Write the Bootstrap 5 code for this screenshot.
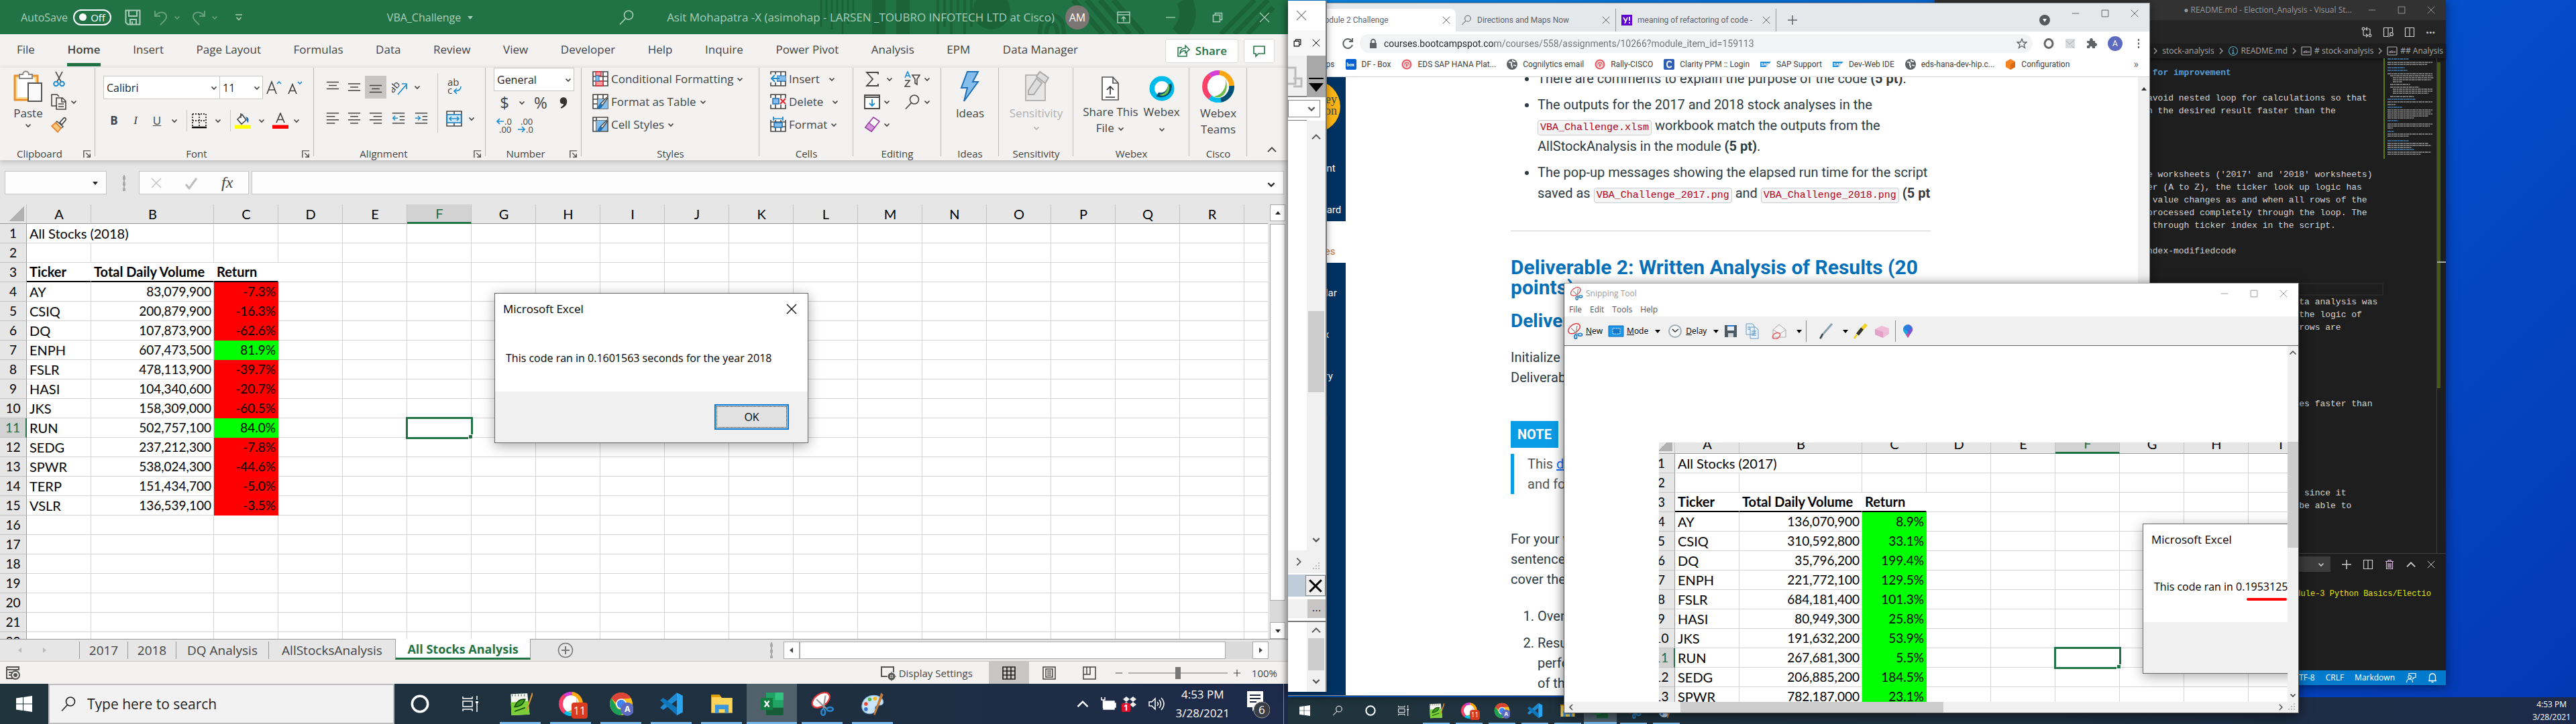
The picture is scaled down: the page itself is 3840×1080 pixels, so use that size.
<!DOCTYPE html>
<html lang="en">
<head>
<meta charset="utf-8">
<meta name="viewport" content="width=device-width, initial-scale=1">
<title>VBA_Challenge - Excel</title>
<link href="https://cdn.jsdelivr.net/npm/bootstrap@5.3.0/dist/css/bootstrap.min.css" rel="stylesheet">
<style>
:root{--seg:"Open Sans","Noto Sans",sans-serif;--xl:#217346}
html,body{height:100%}
body{font-family:var(--seg);font-size:17px;line-height:24px;color:#262626;overflow:hidden;background:#0442bf}
svg{display:block;flex:none}
.s12{width:12px;height:12px}.s16{width:16px;height:16px}.s20{width:20px;height:20px}.s24{width:24px;height:24px}.s28{width:28px;height:28px}.s36{width:36px;height:36px}.s48{width:48px;height:48px}
.ib{background:none;border:0;border-radius:0;padding:0;color:inherit;font:inherit;display:flex;align-items:center;justify-content:center;flex:none}
.w16{width:16px}.w24{width:24px}.w32{width:32px}.w36{width:36px}.w44{width:44px}.w70{width:70px}
.monitor{flex:1 1 50%;min-width:0}
.canvas{position:relative;min-height:0}
.win{position:absolute}
/* Excel title bar and tabs */
.xtitle,.xtabs,.ribbon,.fbar,.stabs,.sstat{flex:none}
.xtitle{height:51px;background:var(--xl);color:#a9cdb8;font-size:16px;position:relative;padding-left:31px}
.deco{position:absolute;right:20px;top:0;width:680px;height:51px}
.xtitle>*:not(.deco){position:relative}
.toggle{width:57px;height:24px;border:2px solid #fff;border-radius:12px;color:#fff;font-size:15px;line-height:20px;padding:0 7px}
.toggle i{width:11px;height:11px;border-radius:50%;background:#fff}
.avatar{width:36px;height:36px;border-radius:50%;background:#7b7574;color:#fff;font-size:16px;line-height:36px;text-align:center}
.xtabs{height:50px;background:#f3f2f1;color:#444;padding-left:25px;padding-right:20px}
.xtabs .nav{flex:0 1 1582px;height:46px}
.xtabs a{color:#444;text-decoration:none;line-height:42px;white-space:nowrap}
.xtabs a.on{font-weight:600;border-bottom:5px solid var(--xl)}
.xbtn{background:#fff;border:1px solid #dcdad8;border-radius:3px;height:36px;color:var(--xl);font-weight:600;font-size:17px}
.ribbon{height:138px;background:#f3f2f1;color:#444;box-shadow:0 2px 8px #0003;position:relative;z-index:1}
.grp{background:linear-gradient(#bdbbb9,#bdbbb9) right top/1px 132px no-repeat;display:flex;flex-direction:column;position:relative;flex:none;white-space:nowrap}
.grp>.gbody{flex:1;display:flex;min-height:0}
.grp>.glabel{height:20px;line-height:20px;font-size:15px;text-align:center}
.grp .launch{position:absolute;right:6px;bottom:3px}
.vsep{width:1px;background:#c8c6c4;height:32px}
.sel{appearance:none;border:1px solid #c8c6c4;background:#fff;border-radius:0;height:35px;padding:0 4px;font-size:16px;color:#262626}
.selbox{position:relative}
.selbox svg{position:absolute;right:3px;top:12px;pointer-events:none}
.picked{background:#c8c6c4}
.rrow{height:34px;display:flex;align-items:center}
.mid{color:#444;font-size:17px}
.fbar{height:66px;background:#e6e6e6;padding:16px 6px 15px 7px}
.fbox{border:1px solid #c6c6c6;background:#fdfdfd;border-radius:0;height:35px}
.dots{width:4px;height:24px;background:radial-gradient(#aaa 2px,transparent 2px) 0 0/4px 9px}
/* worksheets */
.sheet{overflow:hidden;background:#fff}
.grid{table-layout:fixed;border-collapse:separate;border-spacing:0;font-family:Lato,sans-serif;font-size:20px;line-height:28px;color:#000}
.grid td,.grid th{height:29px;padding:0 3px 0 4px;border:0 solid #d4d4d4;border-width:0 1px 1px 0;overflow:visible;white-space:nowrap;font-weight:400}
.grid thead th{background:#e6e6e6;border-color:#c3c3c3;border-bottom-color:#999;text-align:center}
.grid tbody th{background:#e6e6e6;border-color:#c3c3c3;border-right-color:#999;text-align:center;padding:0}
.grid .num{text-align:right;font-size:19px}
.grid .hd{font-weight:700;line-height:27px;border-bottom:2px solid #000;border-right-color:transparent}
.grid .nb{border-right-color:transparent}
.grid .neg{background:#f00;border-color:#f00}
.grid .pos{background:#0f0;border-color:#0f0}
.grid thead .cur{background:#d2d2d2;color:#1e6b3f;line-height:26px;border-bottom:3px solid var(--xl)}
.grid tbody .cur{background:#d2d2d2;color:#1e6b3f;border-right:2px solid var(--xl)}
.grid .act{outline:3px solid var(--xl);outline-offset:-1px;position:relative}
.grid .act::after{content:"";position:absolute;right:-3px;bottom:-3px;width:7px;height:7px;background:var(--xl);border:1px solid #fff}
.corner{background:linear-gradient(135deg,transparent 50%,#b1b1b1 50%) 14px 3px/22px 22px no-repeat #e6e6e6!important}
.sbar{width:30px;background:#e6e6e6;padding-left:3px;padding-right:4px}
.sbx{background:#fff;border:1px solid #ababab}
.stabs{height:34px;background:#e6e6e6;border-top:1px solid #999;border-bottom:1px solid #c6c6c6;font-size:19px;color:#444}
.stabs a{color:#444;text-decoration:none;height:26px;line-height:26px;border-left:1px solid #999;margin-top:3px;text-align:center;flex:none}
.stabs a.on{background:#fff;color:var(--xl);font-weight:700;font-size:18px;height:31px;line-height:30px;margin-top:-1px;border-bottom:3px solid var(--xl);border-right:1px solid #999}
.sstat{height:33px;background:#f3f2f1;color:#444;font-size:15px}
.zoomer{appearance:none;width:148px;height:18px;background:linear-gradient(#b3b0ad,#b3b0ad) center/100% 2px no-repeat;margin:0}
.zoomer::-webkit-slider-thumb{appearance:none;width:8px;height:18px;background:#777;border:0}
/* message boxes */
.msg{position:absolute;width:468px;height:224px;background:#fff;border:1px solid #666;box-shadow:0 4px 18px #0005;color:#000;display:flex;flex-direction:column;font-size:16px}
.msg header{height:46px;padding-left:12px;padding-right:16px;font-size:17px}
.msg p{margin:0;padding:38px 16px 0;flex:1;white-space:nowrap}
.msg footer{height:76px;background:#f0f0f0;padding-right:28px}
.ok{width:111px;height:38px;border:2px solid #0078d7;background:#e1e1e1;outline:1px dotted #000;outline-offset:-4px;font-size:16px;border-radius:0;padding:0;color:#000}
/* taskbars */
.task{background:linear-gradient(90deg,#20343d,#1f3040 60%,#1e2a4a);color:#fff;flex:none;position:relative}
.t1{height:60px}.t2{height:40px}
.t1 .app{width:75px;height:60px}.t2 .app{width:49px;height:40px}
.app.run{background:linear-gradient(#76b9ed,#76b9ed) bottom/61px 3px no-repeat}
.t2 .app.run{background-size:40px 2px}
.app.front{background:linear-gradient(#76b9ed,#76b9ed) bottom/100% 3px no-repeat,#50616c}
.find{width:516px;height:60px;background:#f2f2f2;border:2px solid #bdbdbf;color:#222}
.find input{border:0;background:none;font-size:21px;outline:0;width:400px;padding:0}
.find input::placeholder{color:#222;opacity:1}
.clock{font-size:17px;line-height:28px;text-align:center}
.t2 .clock{font-size:12px;line-height:19px}
.nbadge{position:absolute;background:#d83b1f;color:#fff;border-radius:4px;text-align:center}
.t1 .nbadge{width:24px;height:24px;right:12px;bottom:8px;font-size:16px;line-height:24px}
.t2 .nbadge{width:15px;height:15px;right:8px;bottom:6px;font-size:10px;line-height:15px}
/* VBA editor sliver */
.vba{left:0;top:1px;width:58px;height:1031px;background:#fff;border-right:2px solid #777;box-shadow:0 0 10px #0006;overflow:hidden;z-index:2}
.gr{background:#f0f0f0}
/* browser */
.chrome{left:0;top:4px;width:1285px;height:1034px;background:#fff;border:1px solid #8a8d90;border-width:1px 1px 1px 0;font-family:Roboto,sans-serif;font-size:12px;line-height:16px;color:#5f6368;z-index:1;box-shadow:0 2px 12px #0007}
.cstrip{height:42px;background:#e5e8eb}
.ctab{height:34px;margin-top:8px;white-space:nowrap;overflow:hidden}
.ctab.on{background:#fff;border-radius:8px 8px 0 0;width:250px;padding-left:44px}
.pill{background:#f1f3f4;border-radius:14px;height:28px}
.url{border:0;flex:1;font-size:14px;padding:0;outline:0;color:transparent;background:linear-gradient(90deg,#202124 165px,#6d7175 165px);-webkit-background-clip:text;background-clip:text}
.marks{height:32px;padding-bottom:4px;border-bottom:1px solid #d4d6d8;white-space:nowrap;padding-left:42px;gap:16px}
.marks a{color:#3c4043;text-decoration:none;display:flex;align-items:center;gap:8px}
.side{width:86px;background:#003262;flex:none;font-size:15px;overflow:hidden}
.side a{height:62px;display:flex;align-items:flex-end;justify-content:center;padding-bottom:9px;color:#fff;text-decoration:none}
.side a.on{background:#fff;color:#b4713d}
.logo{height:91px;padding-left:0}
.logo div{width:78px;height:78px;border-radius:50%;background:#fdb515;color:#3b4a50;font:18px/17px "Liberation Serif",serif;text-align:right;padding:20px 5px 0 0;margin-top:5px}
.lesson{padding-left:246px;width:872px;font-size:20px;line-height:30px;color:#2d3b45;white-space:nowrap;overflow:hidden}
.lesson ul{margin:-13px 0 0;padding-left:40px;line-height:31px}
.lesson ul li{margin-bottom:8px}
.lesson code{font:15px/20px "Liberation Mono",monospace;color:#b00020;background:#f5f5f5;border:1px solid #c7cdd1;border-radius:4px;padding:2px 3px}
.lesson hr{margin:40px 0 39px;border-color:#c7cdd1;opacity:1;border-top-width:1px}
.lesson h2{font-size:30px;line-height:30px;font-weight:700;color:#0770b8;margin:0 0 20px}
.lesson h3{font-size:28px;line-height:30px;font-weight:700;color:#0770b8;margin:0 0 24px}
.lesson p{margin:0}
.note{background:#0a9ce5;color:#fff;font-weight:700;display:inline-block;padding:5px 10px;margin-top:50px}
.lesson .quote{border-left:5px solid #0a9ce5;padding-left:20px;margin:9px 0 52px;color:#555}
.lesson ol{padding-left:40px;margin:25px 0 0}
.lesson ol li{margin-bottom:10px}
/* code editor */
.vsc{left:964px;top:0;width:762px;height:1022px;background:#1e1e1e;color:#ccc;font-size:12px;line-height:18px;box-shadow:0 2px 14px #0008;display:flex;flex-direction:column}
.vsc .bar{height:30px;background:#323233;color:#999}
.vsc .tools{height:35px;background:#252526}
.crumb{height:22px;white-space:nowrap;color:#a9a9a9;overflow:hidden;box-shadow:0 3px 4px #0006;font-size:12px}
.code{font:13px/19px "Liberation Mono",monospace;color:#d4d4d4;padding:12px 0 0 317px;margin:0;overflow:hidden;flex:1}
.code b{color:#569cd6}
.code .hl{display:block;height:19px;box-shadow:inset 0 0 0 2px #282828}
.mini{width:79px;flex:none;border-left:2px solid #587c0c;height:150px;padding-left:4px}
.rule{width:14px;border-left:1px solid #3c3c3c;flex:none;background:linear-gradient(#aaa,#aaa) 0 303px/14px 2px no-repeat,linear-gradient(#435b14,#435b14) 0 6px/5px 486px no-repeat}
.panel{height:175px;flex:none;border-top:1px solid #414141;font-size:12px}
.term{font:12px/18px "Liberation Mono",monospace;color:#e5e510;text-align:right;padding:24px 22px 0 0}
.vstat{height:22px;background:#007acc;color:#fff;padding-right:12px}
/* snipping tool */
.snip{left:411px;top:422px;width:1096px;height:642px;background:#fff;border:1px solid #555;border-top-color:#aaa;box-shadow:0 3px 16px #0009;font-size:12px;line-height:18px;z-index:5;color:#000;display:flex;flex-direction:column}
.snip .cap{height:29px;color:#999}
.snip .menu{height:20px;padding-left:7px;gap:12px;color:#555}
.snip .menu a{color:#555;text-decoration:none}
.snip .tb{height:44px;background:#f0f0f0;border-bottom:1px solid #666}
.shot{position:absolute;left:141px;top:144px;right:0;bottom:0;overflow:hidden}
.shot .grid{margin:-12px 0 0 -16px}
.red{position:absolute;left:876px;top:232px;width:60px;height:4px;background:#f00;border-radius:2px}
</style>
</head>
<body>
<svg width="0" height="0" class="position-absolute" aria-hidden="true"><defs>
<symbol id="cv" viewBox="0 0 12 12"><path d="M2.500 4.500 6 8l3.500-3.500" fill="none" stroke="currentColor" stroke-width="1.700"/></symbol>
<symbol id="up" viewBox="0 0 12 12"><path d="M1.500 8.500 6 4l4.500 4.500" fill="none" stroke="currentColor" stroke-width="1.500"/></symbol>
<symbol id="rt" viewBox="0 0 12 12"><path d="M4 2l4 4-4 4" fill="none" stroke="currentColor" stroke-width="1.300"/></symbol>
<symbol id="lt" viewBox="0 0 12 12"><path d="M8 2L4 6l4 4" fill="none" stroke="currentColor" stroke-width="1.500"/></symbol>
<symbol id="tri" viewBox="0 0 12 12"><path d="M2 4h8L6 9z" fill="currentColor"/></symbol>
<symbol id="x" viewBox="0 0 16 16"><path d="M1 1l14 14M15 1L1 15" fill="none" stroke="currentColor" stroke-width="1.300"/></symbol>
<symbol id="min" viewBox="0 0 16 16"><path d="M1 8h14" stroke="currentColor" stroke-width="1.300"/></symbol>
<symbol id="max" viewBox="0 0 16 16"><path d="M1.500 1.500h13v13h-13z" fill="none" stroke="currentColor" stroke-width="1.300"/></symbol>
<symbol id="rest" viewBox="0 0 16 16"><path d="M1.500 4.500h10v10h-10zM4.500 4V1.500h10v10H12" fill="none" stroke="currentColor" stroke-width="1.500"/></symbol>
<symbol id="plus" viewBox="0 0 16 16"><path d="M8 1v14M1 8h14" stroke="currentColor" stroke-width="1.500"/></symbol>
<symbol id="mag" viewBox="0 0 24 24"><circle cx="15" cy="8.500" r="6.500" fill="none" stroke="currentColor" stroke-width="1.600"/><path d="M10.500 13.500 2 22.500" stroke="currentColor" stroke-width="1.600"/></symbol>
<symbol id="floppy" viewBox="0 0 24 24"><path d="M1.500 1.500h21v21h-18l-3-3zM6 2v8h12V2M8 22v-7h9v7M11 22v-4" fill="none" stroke="currentColor" stroke-width="2"/></symbol>
<symbol id="undo" viewBox="0 0 24 24"><path d="M3 2v8h8M3.500 9.500C9 2 20 3 20 11c0 5-4 6-9 12" fill="none" stroke="currentColor" stroke-width="2"/></symbol>
<symbol id="redo" viewBox="0 0 24 24"><path d="M21 2v8h-8M20.500 9.500C15 2 4 3 4 11c0 5 4 6 9 12" fill="none" stroke="currentColor" stroke-width="2"/></symbol>
<symbol id="qat" viewBox="0 0 12 12"><path d="M1 2h10M2.500 6 6 9.500 9.500 6" fill="none" stroke="currentColor" stroke-width="1.700"/></symbol>
<symbol id="ropt" viewBox="0 0 20 20"><path d="M1 2h18v16H1zM1 6h18M10 16V9M7 12l3-3 3 3" fill="none" stroke="currentColor" stroke-width="1.500"/></symbol>
<symbol id="shr" viewBox="0 0 20 20"><path d="M8 5H2v13h13v-6M5 14c0-6 4-8 8-8V2l6 6-6 5V9.500c-4 0-6 1-8 4.500z" fill="none" stroke="currentColor" stroke-width="1.500"/></symbol>
<symbol id="cmt" viewBox="0 0 20 20"><path d="M2 3h16v11H9l-4 4v-4H2z" fill="none" stroke="currentColor" stroke-width="1.600"/></symbol>
<symbol id="launch" viewBox="0 0 14 14"><path d="M1 13V1h12M5 5l7 7M12 6v6H6" fill="none" stroke="#555" stroke-width="1.700"/></symbol>
<symbol id="paste" viewBox="0 0 48 48"><path d="M4 8h34v36H4z" fill="#fbdc9b" stroke="#e8912d" stroke-width="3"/><path d="M8 12h26v28H8z" fill="#fff"/><path d="M11 12V6h5c0-6 9-6 9 0h5v6z" fill="#fff" stroke="#888" stroke-width="2"/><path d="M24 19h20v27H24z" fill="#fafafa" stroke="#555" stroke-width="2"/></symbol>
<symbol id="cut" viewBox="0 0 24 24"><path d="M7 1l8 15M17 1L9 16" stroke="#555" stroke-width="1.700"/><g fill="none" stroke="#1e8bcd" stroke-width="2"><circle cx="7.500" cy="19" r="3.300"/><circle cx="16.500" cy="19" r="3.300"/></g></symbol>
<symbol id="copy" viewBox="0 0 24 24"><path d="M9 18H1V1h8l3 3M8 6h9l5 5v12H8zM16 6v6h6M11 15h8M11 19h8" fill="none" stroke="#444" stroke-width="1.600"/></symbol>
<symbol id="brush" viewBox="0 0 24 24"><path d="M13 9l6-7c2-1 4 1 3 3l-6 7z" fill="#fff" stroke="#444" stroke-width="1.700"/><path d="M9 7l9 8-3 2-8-8z" fill="#fff" stroke="#444" stroke-width="1.500"/><path d="M7 9l8 8-5 6L1 14z" fill="#fbc87a" stroke="#e8842d" stroke-width="1.800"/></symbol>
<symbol id="bord" viewBox="0 0 24 24"><path d="M2 2h20v19M2 2v19M12 2v19M2 12h20" fill="none" stroke="#333" stroke-width="1.800" stroke-dasharray="2 2"/><path d="M1 22h22" stroke="#000" stroke-width="2.500"/></symbol>
<symbol id="fill" viewBox="0 0 24 24"><path d="M4 10l7-7 6 8-7 6zM9 1v7" fill="#fff" stroke="#444" stroke-width="1.600"/><path d="M16 6c5 1 5 4 4 9-3-1-1-5-4-9z" fill="#1c6fb5"/><path d="M0 18.500h24V24H0z" fill="#ff0"/></symbol>
<symbol id="fcol" viewBox="0 0 24 24"><path d="M6 15 12 1l6 14M8 10.500h8" fill="none" stroke="#444" stroke-width="1.700"/><path d="M0 18.500h24V24H0z" fill="#f00"/></symbol>
<symbol id="abig" viewBox="0 0 24 24"><path d="M2 21 9 3l7 18M4.500 15h9" fill="none" stroke="#444" stroke-width="1.700"/><path d="M17 6l3-3 3 3" fill="none" stroke="#1e8bcd" stroke-width="1.700"/></symbol>
<symbol id="asml" viewBox="0 0 24 24"><path d="M2 21 8 7l6 14M4.500 16.500h7" fill="none" stroke="#444" stroke-width="1.700"/><path d="M16 3l3 3 3-3" fill="none" stroke="#1e8bcd" stroke-width="1.700"/></symbol>
<symbol id="at" viewBox="0 0 24 24"><path d="M1 3h22M5 9h14M1 15h22" stroke="#444" stroke-width="1.800"/></symbol>
<symbol id="am" viewBox="0 0 24 24"><path d="M1 6h22M5 12h14M1 18h22" stroke="#444" stroke-width="1.800"/></symbol>
<symbol id="ab" viewBox="0 0 24 24"><path d="M1 9h22M5 15h14M1 21h22" stroke="#444" stroke-width="1.800"/></symbol>
<symbol id="al" viewBox="0 0 24 24"><path d="M1 2h22M1 8h15M1 14h22M1 20h15" stroke="#444" stroke-width="1.800"/></symbol>
<symbol id="ac" viewBox="0 0 24 24"><path d="M1 2h22M5 8h14M1 14h22M5 20h14" stroke="#444" stroke-width="1.800"/></symbol>
<symbol id="ar" viewBox="0 0 24 24"><path d="M1 2h22M8 8h15M1 14h22M8 20h15" stroke="#444" stroke-width="1.800"/></symbol>
<symbol id="ind" viewBox="0 0 24 24"><path d="M1 2h22M14 8h9M14 14h9M1 20h22" stroke="#444" stroke-width="1.800"/><path d="M11 11H2M6 7l-4 4 4 4" fill="none" stroke="#1e8bcd" stroke-width="1.800"/></symbol>
<symbol id="oud" viewBox="0 0 24 24"><path d="M1 2h22M14 8h9M14 14h9M1 20h22" stroke="#444" stroke-width="1.800"/><path d="M1 11h9M6 7l4 4-4 4" fill="none" stroke="#1e8bcd" stroke-width="1.800"/></symbol>
<symbol id="ori" viewBox="0 0 24 24"><path d="M9 23 22 8M22 15V7h-7" fill="none" stroke="#1e8bcd" stroke-width="1.700"/><text x="-4" y="15" transform="rotate(-50 6 12)" font-size="15" fill="#444">ab</text></symbol>
<symbol id="wrap" viewBox="0 0 24 24"><text x="2" y="11" font-size="15" fill="#444">ab</text><text x="2" y="23" font-size="15" fill="#444">c</text><path d="M22 12c0 5-3 7-10 7M16 15l-4 4 4 4" fill="none" stroke="#1e8bcd" stroke-width="1.700"/></symbol>
<symbol id="merge" viewBox="0 0 24 24"><path d="M1 1h22v22H1zM12 1v5M12 18v5M1 6h22M1 18h22" fill="#fff" stroke="#444" stroke-width="1.600"/><path d="M1.500 6h21v12h-21z" fill="#d3e9f8" stroke="#1e8bcd" stroke-width="1.600"/><path d="M5 12h14M8 9l-3 3 3 3M16 9l3 3-3 3" fill="none" stroke="#1e8bcd" stroke-width="1.600"/></symbol>
<symbol id="comma" viewBox="0 0 16 24"><path d="M8 3c4 0 6 3 6 7 0 6-4 10-10 12l-1-2c4-2 5-4 5-6-3 1-6-1-6-5 0-3 2-6 6-6z" fill="#333"/></symbol>
<symbol id="dec1" viewBox="0 0 24 24"><path d="M11 6H1M5 2 1 6l4 4" fill="none" stroke="#1e8bcd" stroke-width="1.700"/><text x="12" y="11" font-size="13" fill="#444">.0</text><text x="4" y="23" font-size="13" fill="#444">.00</text></symbol>
<symbol id="dec2" viewBox="0 0 24 24"><path d="M0 18h10M6 14l4 4-4 4" fill="none" stroke="#1e8bcd" stroke-width="1.700"/><text x="4" y="11" font-size="13" fill="#444">.00</text><text x="12" y="23" font-size="13" fill="#444">.0</text></symbol>
<symbol id="g0" viewBox="0 0 24 24"><path d="M1 1h22v21H1zM1 8h22M1 15h22M8 1v21M16 1v21" fill="#fff" stroke="#444" stroke-width="1.600"/></symbol>
<symbol id="cf" viewBox="0 0 24 24"><use href="#g0"/><path d="M5 1h8v6H5zM5 15h11v7H5z" fill="#f59a9e" stroke="#d9262e" stroke-width="1.300"/><path d="M5 7h5v8H5z" fill="#83beec" stroke="#1e6fb5"/></symbol>
<symbol id="ft" viewBox="0 0 24 24"><use href="#g0"/><path d="M8 8h15v14H8z" fill="#83beec"/><path d="M23 6l-8 11-3-2L22 5" fill="#fff" stroke="#444" stroke-width="1.400"/><path d="M12 15c3 1 4 3 2 5-2 3-6 2-8 2 3-1 2-6 6-7z" fill="#1e6fb5"/></symbol>
<symbol id="cs" viewBox="0 0 24 24"><path d="M1 1h22v21H1zM1 6h22M6 1v21" fill="#fff" stroke="#444" stroke-width="1.600"/><path d="M6 6h16v15H6z" fill="#83beec"/><path d="M23 6l-8 11-3-2L22 5" fill="#fff" stroke="#444" stroke-width="1.400"/><path d="M12 15c3 1 4 3 2 5-2 3-6 2-8 2 3-1 2-6 6-7z" fill="#1e6fb5"/></symbol>
<symbol id="ins" viewBox="0 0 24 24"><use href="#g0"/><path d="M10 7h14v8H10z" fill="#83beec" stroke="#1e6fb5"/><path d="M0 5h10v12H0z" fill="#f3f2f1"/><path d="M14 11H2M7 6l-5 5 5 5" fill="none" stroke="#1e8bcd" stroke-width="2"/></symbol>
<symbol id="del" viewBox="0 0 24 24"><use href="#g0"/><path d="M0 6h24v10H0z" fill="#f3f2f1"/><path d="M4 7h9v8H4z" fill="#83beec" stroke="#1e6fb5" stroke-width="1.500"/><path d="M15 7l8 8M23 7l-8 8" stroke="#e02b33" stroke-width="2.200"/></symbol>
<symbol id="fmt" viewBox="0 0 24 24"><use href="#g0"/><path d="M0 0h24v5H0z" fill="#f3f2f1"/><path d="M5 3h14M5 0v6M19 0v6" stroke="#1e8bcd" stroke-width="1.700"/><path d="M6 9h12v7H6z" fill="#83beec" stroke="#1e6fb5" stroke-width="1.500"/></symbol>
<symbol id="sum" viewBox="0 0 24 24"><path d="M21 5V2H4l9 10L4 22h17v-3" fill="none" stroke="#444" stroke-width="1.800"/></symbol>
<symbol id="fdn" viewBox="0 0 24 24"><path d="M1 2h22v20H1zM1 5h22" fill="#fff" stroke="#444" stroke-width="1.800"/><path d="M12 8v10M8 14l4 4 4-4" fill="none" stroke="#1e8bcd" stroke-width="1.800"/></symbol>
<symbol id="era" viewBox="0 0 24 24"><path d="M14 1l9 6L11 22 2 16z" fill="#fff" stroke="#9b3fa5" stroke-width="1.700"/><path d="M7 9l9 7-5 6-9-6z" fill="#d596db" stroke="#9b3fa5" stroke-width="1.400"/></symbol>
<symbol id="sort" viewBox="0 0 24 24"><path d="M1 10 5 1l4 9M2.500 7h5" fill="none" stroke="#1e8bcd" stroke-width="1.600"/><path d="M1 14h7L1 23h8M12 6h11l-4 6v8l-3-2v-6z" fill="none" stroke="#444" stroke-width="1.600"/></symbol>
<symbol id="bolt" viewBox="0 0 36 48"><path d="M14 2h16l-8 15h8L9 46l5-20H5z" fill="#83beec" stroke="#1e6fb5" stroke-width="2"/></symbol>
<symbol id="sens" viewBox="0 0 40 48"><path d="M4 7h29v38H4z" fill="#e6e6e6" stroke="#b5b5b5" stroke-width="2"/><path d="M8 30l12-18 8 7-12 17-8 0zM20 9l5-7 13 9-5 8z" fill="#ddd" stroke="#aaa" stroke-width="2"/></symbol>
<symbol id="sfile" viewBox="0 0 28 38"><path d="M2 2h16l8 9v25H2zM18 2v9h8" fill="#fff" stroke="#555" stroke-width="1.700"/><path d="M14 28V17M9 21l5-5 5 5M7 32h14" fill="none" stroke="#333" stroke-width="1.700"/></symbol>
<symbol id="webex" viewBox="0 0 40 40"><circle cx="20" cy="20" r="15.500" fill="#fff" stroke="#00bceb" stroke-width="8"/><path d="M35 12a17 17 0 0 1-24 20l4-6c8 3 14-4 15-12z" fill="#005073"/><path d="M29 11c2 9-3 18-13 19 10 5 19-6 15-17z" fill="#6ebe4a"/></symbol>
<symbol id="teams" viewBox="0 0 48 48"><g fill="none" stroke-width="8"><path d="M12 8a20 20 0 0 1 14-4" stroke="#d43fd8"/><path d="M26 4a20 20 0 0 1 18 19" stroke="#fca613"/><path d="M44 23a20 20 0 0 1-18 21" stroke="#005073"/><path d="M28 44a20 20 0 0 1-16-4" stroke="#00bceb"/><path d="M12 40A20 20 0 0 1 12 8" stroke="#fb4169"/></g><ellipse cx="24" cy="24" rx="16" ry="17" fill="#fff"/><path d="M34 11c4 10-2 26-17 28 12 6 26-8 17-28z" fill="#6ebe4a"/></symbol>
<symbol id="fx" viewBox="0 0 24 24"><text x="1" y="19" font-family="Liberation Serif" font-style="italic" font-size="24" fill="#444">fx</text></symbol>
<symbol id="rec" viewBox="0 0 24 24"><path d="M2 3h18v5M2 3v17h9M2 7h18M5 11h5M5 15h4" fill="none" stroke="#555" stroke-width="2"/><circle cx="15" cy="15" r="6" fill="none" stroke="#555" stroke-width="2"/><circle cx="15" cy="15" r="3" fill="#555"/></symbol>
<symbol id="dset" viewBox="0 0 24 24"><path d="M10 17H2V3h18v8" fill="none" stroke="#555" stroke-width="2"/><circle cx="17" cy="17" r="4" fill="none" stroke="#555" stroke-width="3"/><path d="M17 10v14M10 17h14" stroke="#555"/></symbol>
<symbol id="v1" viewBox="0 0 20 20"><path d="M1 1h18v18H1zM1 7h18M1 13h18M7 1v18M13 1v18" fill="none" stroke="#222" stroke-width="1.700"/></symbol>
<symbol id="v2" viewBox="0 0 20 20"><path d="M1 1h18v18H1zM5 4h10v12H5zM7 7h6M7 10h6M7 13h6" fill="none" stroke="#444" stroke-width="1.500"/></symbol>
<symbol id="v3" viewBox="0 0 20 20"><path d="M1 1h18v18H1zM1 12h10V1M6 1v11" fill="none" stroke="#444" stroke-width="1.500"/></symbol>
<symbol id="start" viewBox="0 0 24 24"><path d="M0 3.500 10 2v9.500H0zM11 1.900 24 0v11.500H11zM0 12.500h10V22L0 20.500zM11 12.500h13V24l-13-1.900z" fill="#fff"/></symbol>
<symbol id="cort" viewBox="0 0 24 24"><circle cx="12" cy="12" r="10" fill="none" stroke="#fff" stroke-width="3"/></symbol>
<symbol id="tview" viewBox="0 0 24 24"><path d="M1 1v3h14V1M1 23v-3h14v3M1 8h14v8H1zM22 0v6M22 11v13" fill="none" stroke="#fff" stroke-width="1.500"/><path d="M20 8h4v3h-4z" fill="#fff"/></symbol>
<symbol id="npp" viewBox="0 0 32 32"><path d="M3 3l22-1 3 28-24 1z" fill="#f2f6ee"/><path d="M3 14l23-2 2 18-24 1z" fill="#7bd03a"/><path d="M5 3v3M9 3v3M13 3v3M17 3v3M21 3v3" stroke="#666"/><path d="M8 20c3-8 8-11 14-10-2 4-3 8-12 10zM8 26l14-5" fill="#3d9b1c" stroke="#174d0a" stroke-width="1.500"/><path d="M31 1l2 1-8 22-2 2z" fill="#e0952b"/></symbol>
<symbol id="chr" viewBox="0 0 32 32"><circle cx="16" cy="16" r="15" fill="#fbc116"/><path d="M3 8.500A15 15 0 0 1 29 8.500L16 9.500a7 7 0 0 0-7 5z" fill="#db4437"/><path d="M3 8.500A15 15 0 0 0 16 31l6-11a7 7 0 0 1-13-2z" fill="#1b9e58"/><circle cx="16" cy="16" r="7" fill="#fff"/><circle cx="16" cy="16" r="5.500" fill="#4285f4"/></symbol>
<symbol id="chra" viewBox="0 0 32 32"><use href="#chr"/><circle cx="24" cy="23" r="9" fill="#5c6bc0"/><text x="20.500" y="27" font-size="11" font-weight="700" fill="#fff">A</text></symbol>
<symbol id="vs" viewBox="0 0 32 32"><path d="M23 1l8 4v22l-8 4z" fill="#2ba4f0"/><path d="M23 1v10L5 24l-4-3 3-3z" fill="#1f8ad2"/><path d="M23 31V21L5 8l-4 3 3 3z" fill="#0f76ba"/></symbol>
<symbol id="fold" viewBox="0 0 32 32"><path d="M2 4h11l3 4h14v20H2z" fill="#ffd458"/><path d="M2 4h11l2 3H2z" fill="#e2a100"/><path d="M7 28V17h18v11h-5v-5h-8v5z" fill="#3b97dd"/></symbol>
<symbol id="xls" viewBox="0 0 32 32"><path d="M8 1h23v30H8z" fill="#21a366"/><path d="M20 1h11v10H20z" fill="#33c481"/><path d="M8 21h23v10H8z" fill="#185c37"/><path d="M1 8h16v16H1z" fill="#107c41"/><path d="M6 12l6 8M12 12l-6 8" stroke="#fff" stroke-width="2"/></symbol>
<symbol id="snp" viewBox="0 0 32 32"><ellipse cx="14" cy="11" rx="13" ry="8" transform="rotate(-35 14 11)" fill="#fff" stroke="#e03c3c" stroke-width="2"/><path d="M8 10l14 13M20 5l-3 19" stroke="#999" stroke-width="2"/><g fill="none" stroke="#2a84c9" stroke-width="2.500"><ellipse cx="17" cy="27" rx="2.500" ry="4"/><ellipse cx="26" cy="23" rx="4" ry="2.500"/></g></symbol>
<symbol id="pnt" viewBox="0 0 32 32"><path d="M15 5C6 6 0 14 2 22c2 7 11 9 16 5 3-3-1-5 2-8s9 1 10-5c0-6-7-10-15-9z" fill="#c9e4f6" stroke="#7fb3d8"/><circle cx="7" cy="16" r="2.500" fill="#e84b3c"/><circle cx="12" cy="10" r="2.500" fill="#5ab552"/><circle cx="7" cy="23" r="2.500" fill="#3673c9"/><circle cx="19" cy="9" r="2.500" fill="#f4b62c"/><path d="M27 1l3 3-11 27-2-1z" fill="#c47a34"/></symbol>
<symbol id="batt" viewBox="0 0 24 24"><path d="M5 8h16v12H5zM21 11h2v6h-2" fill="#fff" stroke="#fff" stroke-width="1.500"/><path d="M2 2v4h5V2M4.500 6v12" fill="none" stroke="#fff" stroke-width="1.500"/></symbol>
<symbol id="drop" viewBox="0 0 24 24"><path d="M7 1l5 4-5 4-5-4zM17 1l5 4-5 4-5-4zM7 9l5 4-5 4-5-4zM17 9l5 4-5 4-5-4z" fill="#eee"/><rect y="11" width="13" height="13" rx="2" fill="#e0102c"/><text x="3" y="22" font-size="12" font-weight="700" fill="#fff">1</text></symbol>
<symbol id="vol" viewBox="0 0 24 24"><path d="M1 9h4l5-5v16l-5-5H1zM13 9q3 3 0 6M16 6q5 6 0 12M19 3q8 9 0 18" fill="none" stroke="#fff" stroke-width="1.500"/></symbol>
<symbol id="noti" viewBox="0 0 36 44"><path d="M2 3h24v24H16l-6 6v-6H2z" fill="#fff"/><path d="M6 9h16M6 14h16M6 19h10" stroke="#1e2a4a" stroke-width="2"/><circle cx="24" cy="31" r="12" fill="#3a3d45" stroke="#999"/><text x="19" y="37" font-size="17" fill="#fff">6</text></symbol>
<symbol id="globe" viewBox="0 0 16 16"><circle cx="8" cy="8" r="8" fill="#5f6368"/><path d="M3 5c4-1 5 1 4 3s2 2 1 5M9 1c-1 3 2 3 4 3M10 9l4 1" stroke="#fff" stroke-width="1.800" fill="none"/></symbol>
<symbol id="redo2" viewBox="0 0 16 16"><circle cx="8" cy="8" r="7.500" fill="#e4606a"/><circle cx="8" cy="8" r="4.500" fill="none" stroke="#fff" stroke-width="1.300"/><path d="M6 12V8q2-3 4 0v4" fill="none" stroke="#fff" stroke-width="1.200"/></symbol>
<symbol id="box" viewBox="0 0 16 16"><rect width="16" height="16" rx="2" fill="#0061d5"/><text x="1.500" y="10.500" font-size="7" font-weight="700" fill="#fff">box</text></symbol>
<symbol id="clar" viewBox="0 0 16 16"><rect width="16" height="16" rx="2" fill="#2f5fb3"/><path d="M11.500 5.500Q11 3.500 8.500 3.500 5 3.500 5 8t3.500 4.500q2.500 0 3-2" fill="none" stroke="#fff" stroke-width="2"/></symbol>
<symbol id="sap" viewBox="0 0 16 16"><path d="M0 4h16L8 12H0z" fill="#1a8fd8"/><text x="1" y="10" font-size="6" font-weight="700" fill="#fff">SAP</text></symbol>
<symbol id="cube" viewBox="0 0 16 16"><path d="M8 0l7 4v8l-7 4-7-4V4z" fill="#f58220"/><path d="M8 8l7-4v8l-7 4z" fill="#d9680f"/></symbol>
<symbol id="split" viewBox="0 0 16 16"><path d="M1.500 1.500h13v13h-13zM8 1.500v13" fill="none" stroke="currentColor" stroke-width="1.200"/></symbol>
<symbol id="prev" viewBox="0 0 16 16"><path d="M8 14.500H1.500v-13h13V8M8 1.500v13" fill="none" stroke="currentColor" stroke-width="1.200"/><circle cx="13" cy="11" r="2.300" fill="none" stroke="currentColor" stroke-width="1.200"/><path d="M11.500 12.500 9 15.500" stroke="currentColor"/></symbol>
<symbol id="diff" viewBox="0 0 16 16"><g fill="none" stroke="currentColor" stroke-width="1.200"><circle cx="3" cy="3" r="1.800"/><circle cx="13" cy="13" r="1.800"/><path d="M3 5v6q0 2 2 2h4M7 10.500 9.500 13 7 15.500M13 11V5q0-2-2-2H7M9 .5 6.500 3 9 5.500"/></g></symbol>
<symbol id="abc" viewBox="0 0 16 16"><rect x="1" y="2" width="14" height="12" rx="1" fill="none" stroke="currentColor" stroke-width="1.200"/><text x="3" y="10.500" font-size="6" font-weight="700" fill="currentColor">abc</text></symbol>
<symbol id="info" viewBox="0 0 16 16"><circle cx="8" cy="8" r="6.500" fill="none" stroke="#519aba" stroke-width="1.200"/><path d="M8 4v1.500M6.500 7H8v4.500M6 11.500h4" fill="none" stroke="#519aba" stroke-width="1.300"/></symbol>
<symbol id="trash" viewBox="0 0 16 16"><path d="M2 3.500h12M6 3V1.500h4V3M3.500 4v10.500h9V4M6 6v7M8 6v7M10 6v7" fill="none" stroke="#d9b8dd" stroke-width="1.200"/></symbol>
<symbol id="fb" viewBox="0 0 16 16"><path d="M5 4V1.500h10v6h-2l-2 2V7.500" fill="none" stroke="#fff" stroke-width="1.200"/><circle cx="6" cy="7" r="2.300" fill="none" stroke="#fff" stroke-width="1.200"/><path d="M1.500 15q0-5 4.500-5t4.500 5" fill="none" stroke="#fff" stroke-width="1.200"/></symbol>
<symbol id="bell" viewBox="0 0 16 16"><path d="M2 12.500h12M3.500 12V7q0-5 4.500-5t4.500 5v5M6.500 14.500h3" fill="none" stroke="#fff" stroke-width="1.300"/></symbol>
<symbol id="mode" viewBox="0 0 24 20"><path d="M1 2h22v16H1z" fill="#1c97ea" stroke="#0f6bb5"/><path d="M7 6h11v8H7z" fill="#1176c7" stroke="#fff" stroke-dasharray="1.500 1"/></symbol>
<symbol id="clk" viewBox="0 0 24 24"><circle cx="12" cy="12" r="9" fill="#f4f6f7" stroke="#a3adb3" stroke-width="2"/><path d="M8 9l4 4 5-4" fill="none" stroke="#333" stroke-width="1.500"/></symbol>
<symbol id="dsk" viewBox="0 0 24 24"><path d="M3 3h18v18H3z" fill="#4d5a63"/><path d="M7 3h10v8H7z" fill="#e9eef2"/><path d="M7 3h10v2H7z" fill="#1c7cd5"/><path d="M8 15h8v6H8z" fill="#cfd6da"/></symbol>
<symbol id="cp2" viewBox="0 0 24 24"><path d="M3 1h9l3 3v13H3zM9 6h8l4 4v13H9z" fill="#e9f3fb" stroke="#6c9cc4"/><path d="M5 6h4M5 9h4M11 12h7M11 15h7M11 18h7" stroke="#3f82c0"/></symbol>
<symbol id="mail" viewBox="0 0 24 24"><path d="M3 10l9-8 10 8v11H3z" fill="#f4f4f4" stroke="#aaa"/><path d="M3 10l10 6 9-6" fill="none" stroke="#aaa"/><ellipse cx="8" cy="19" rx="6" ry="4" fill="none" stroke="#e36a72" stroke-width="1.700" transform="rotate(-30 8 19)"/></symbol>
<symbol id="pen" viewBox="0 0 24 24"><path d="M22 1L8 17l-3 6" fill="none" stroke="#8aa0ae" stroke-width="3"/><path d="M8 16l-4 7" stroke="#333" stroke-width="2"/></symbol>
<symbol id="hil" viewBox="0 0 24 24"><path d="M21 2L9 15" stroke="#f4d320" stroke-width="5"/><path d="M15 8l-7 9" stroke="#333" stroke-width="5"/><path d="M7 17l-4 6" stroke="#f4d320" stroke-width="3"/></symbol>
<symbol id="ers" viewBox="0 0 24 24"><path d="M2 9l10-5 11 4v8l-9 6-12-5z" fill="#eebbd8"/><path d="M2 9l12 4v9L2 17z" fill="#e3a0c8"/></symbol>
<symbol id="p3d" viewBox="0 0 24 24"><path d="M12 24 4 12a9 9 0 0 1 8-12z" fill="#19a7e0"/><path d="M12 24l8-12A9 9 0 0 0 12 0z" fill="#7a56d6"/><path d="M4 8a8 8 0 0 1 15-2l-7 6z" fill="#2a7de1"/><path d="M9 17h6l-3 7z" fill="#f0457d"/></symbol>
<symbol id="grip" viewBox="0 0 12 12"><path d="M9 0h2v2H9zM9 4h2v2H9zM9 8h2v2H9zM5 4h2v2H5zM5 8h2v2H5zM1 8h2v2H1z" fill="#bbb"/></symbol>
</defs></svg>

<div class="d-flex vh-100">
<!-- primary monitor -->
<section class="monitor d-flex flex-column">
<main class="canvas flex-grow-1 d-flex flex-column">
  <header class="xtitle d-flex align-items-center">
    <svg class="deco" viewBox="0 0 680 51" preserveAspectRatio="none"><g stroke="#1b6339" fill="none"><path d="M4 0v40M12 0v30M20 0v44M28 0v20M36 0v51M44 0v36M52 0v28" stroke-width="3"/><path d="M90 0v51M126 0v51" stroke-width="20"/><path d="M178 0v51M188 0v40M198 0v51M208 0v30M218 0v51M228 0v40" stroke-width="4"/><path d="M330 51q0-28 18-28t18 28M340 51q0-16 8-16t8 16" stroke-width="6"/><path d="M380 0l44 51M400 0l44 51M420 0l44 51M440 0l44 51" stroke-width="8"/><path d="M545 0q14 26-8 51" stroke-width="24"/><path d="M600 51L650 0M620 51L670 0M640 51l38-40" stroke-width="7"/></g><circle cx="258" cy="16" r="28" fill="#1b6339"/></svg>
    <span>AutoSave</span>
    <button class="btn ib toggle justify-content-between ms-2" aria-pressed="false"><i></i>Off</button>
    <button class="btn ib ms-3" style="width:32px" aria-label="Save"><svg class="s24"><use href="#floppy"/></svg></button>
    <span class="d-flex opacity-50"><button class="btn ib ms-2 w36" aria-label="Undo"><svg class="s24"><use href="#undo"/></svg></button><svg class="s12 align-self-center"><use href="#cv"/></svg>
    <button class="btn ib ms-2 w36" aria-label="Redo"><svg class="s24"><use href="#redo"/></svg></button><svg class="s12 align-self-center"><use href="#cv"/></svg></span>
    <button class="btn ib ms-4" aria-label="Customize toolbar"><svg class="s12"><use href="#qat"/></svg></button>
    <span class="flex-grow-1 d-flex justify-content-center align-items-center gap-2">VBA_Challenge<svg class="s12"><use href="#tri"/></svg></span>
    <button class="btn ib me-5" aria-label="Search"><svg class="s24"><use href="#mag"/></svg></button>
    <span class="mid text-reset text-nowrap">Asit Mohapatra -X (asimohap - LARSEN _TOUBRO INFOTECH LTD at Cisco)</span>
    <span class="avatar mx-3">AM</span>
    <button class="btn ib w70" aria-label="Ribbon options"><svg class="s20"><use href="#ropt"/></svg></button>
    <button class="btn ib w70" aria-label="Minimize"><svg class="s16"><use href="#min"/></svg></button>
    <button class="btn ib w70" aria-label="Restore"><svg class="s16"><use href="#rest"/></svg></button>
    <button class="btn ib w70" aria-label="Close"><svg class="s16"><use href="#x"/></svg></button>
  </header>
  <div class="xtabs d-flex align-items-center">
    <nav class="nav justify-content-between flex-nowrap"><a href="#">File</a><a href="#" class="on">Home</a><a href="#">Insert</a><a href="#">Page Layout</a><a href="#">Formulas</a><a href="#">Data</a><a href="#">Review</a><a href="#">View</a><a href="#">Developer</a><a href="#">Help</a><a href="#">Inquire</a><a href="#">Power Pivot</a><a href="#">Analysis</a><a href="#">EPM</a><a href="#">Data Manager</a></nav>
    <button class="btn ib xbtn ms-auto px-3 gap-2"><svg class="s20"><use href="#shr"/></svg>Share</button>
    <button class="btn ib xbtn ms-2" style="width:46px" aria-label="Comments"><svg class="s20"><use href="#cmt"/></svg></button>
  </div>
  <div class="ribbon d-flex">
    <div class="grp" style="width:142px"><div class="gbody">
      <button class="btn ib flex-column ms-3 justify-content-start pt-1" style="width:52px"><svg class="s48"><use href="#paste"/></svg><span class="mt-1 mid">Paste</span><svg class="s12"><use href="#cv"/></svg></button>
      <div class="ps-2"><div class="rrow"><button class="btn ib" aria-label="Cut"><svg class="s24"><use href="#cut"/></svg></button></div><div class="rrow gap-1"><button class="btn ib" aria-label="Copy"><svg class="s24"><use href="#copy"/></svg></button><svg class="s12"><use href="#cv"/></svg></div><div class="rrow"><button class="btn ib" aria-label="Format Painter"><svg class="s24"><use href="#brush"/></svg></button></div></div>
    </div><div class="glabel pe-4">Clipboard</div><button class="btn ib launch" aria-label="Clipboard options"><svg class="s12"><use href="#launch"/></svg></button></div>
    <div class="grp" style="width:326px"><div class="gbody flex-column ps-2 ms-1">
      <div class="d-flex align-items-center pt-2 mt-1"><label class="selbox"><select class="sel" style="width:174px" aria-label="Font"><option>Calibri</option></select><svg class="s12"><use href="#cv"/></svg></label><label class="selbox"><select class="sel border-start-0" style="width:64px" aria-label="Font size"><option>11</option></select><svg class="s12"><use href="#cv"/></svg></label><button class="btn ib w32" aria-label="Grow font"><svg class="s24"><use href="#abig"/></svg></button><button class="btn ib w32" aria-label="Shrink font"><svg class="s24"><use href="#asml"/></svg></button></div>
      <div class="d-flex align-items-center mt-3"><button class="btn ib w32 fw-bold">B</button><button class="btn ib w32 fst-italic" style="font-family:'Liberation Serif'">I</button><button class="btn ib w32 text-decoration-underline">U</button><svg class="s12 mx-1"><use href="#cv"/></svg><span class="vsep ms-2"></span><button class="btn ib w36" aria-label="Borders"><svg class="s24"><use href="#bord"/></svg></button><svg class="s12 mx-1"><use href="#cv"/></svg><span class="vsep ms-2"></span><button class="btn ib w36" aria-label="Fill colour"><svg class="s24"><use href="#fill"/></svg></button><svg class="s12 mx-1"><use href="#cv"/></svg><button class="btn ib w36" aria-label="Font colour"><svg class="s24"><use href="#fcol"/></svg></button><svg class="s12"><use href="#cv"/></svg></div>
    </div><div class="glabel pe-4">Font</div><button class="btn ib launch" aria-label="Font options"><svg class="s12"><use href="#launch"/></svg></button></div>
    <div class="grp" style="width:256px"><div class="gbody ps-2 ms-1">
      <div class="me-1"><div class="d-flex align-items-center pt-2 mt-1"><button class="btn ib w32" aria-label="Top"><svg class="s20"><use href="#at"/></svg></button><button class="btn ib w32" aria-label="Middle"><svg class="s20"><use href="#am"/></svg></button><button class="btn ib w32 picked" style="height:34px" aria-label="Bottom"><svg class="s20"><use href="#ab"/></svg></button><button class="btn ib w32 ms-1" aria-label="Orientation"><svg class="s24"><use href="#ori"/></svg></button><svg class="s12 mx-1"><use href="#cv"/></svg></div>
      <div class="d-flex align-items-center mt-3 pt-1"><button class="btn ib w32" aria-label="Left"><svg class="s20"><use href="#al"/></svg></button><button class="btn ib w32" aria-label="Centre"><svg class="s20"><use href="#ac"/></svg></button><button class="btn ib w32" aria-label="Right"><svg class="s20"><use href="#ar"/></svg></button><button class="btn ib w36" aria-label="Outdent"><svg class="s20"><use href="#ind"/></svg></button><button class="btn ib w32" aria-label="Indent"><svg class="s20"><use href="#oud"/></svg></button></div></div>
      <span class="vsep h-75 ms-1 mt-2"></span>
      <div class="ps-2 ms-1"><div class="pt-3"><button class="btn ib" aria-label="Wrap"><svg class="s24"><use href="#wrap"/></svg></button></div><div class="d-flex align-items-center mt-4 gap-2"><button class="btn ib" aria-label="Merge"><svg class="s24"><use href="#merge"/></svg></button><svg class="s12"><use href="#cv"/></svg></div></div>
    </div><div class="glabel pe-5">Alignment</div><button class="btn ib launch" aria-label="Alignment options"><svg class="s12"><use href="#launch"/></svg></button></div>
    <div class="grp" style="width:143px"><div class="gbody flex-column ps-2 ms-1">
      <label class="selbox" style="width:120px"><select class="sel w-100" aria-label="Number format"><option>General</option></select><svg class="s12"><use href="#cv"/></svg></label>
      <div class="rrow fs-4"><button class="btn ib w32">$</button><svg class="s12 mx-1"><use href="#cv"/></svg><button class="btn ib w36">%</button><button class="btn ib w32" aria-label="Comma style"><svg width="14" height="22"><use href="#comma"/></svg></button></div>
      <div class="rrow"><button class="btn ib w32" aria-label="Increase decimal"><svg class="s24"><use href="#dec1"/></svg></button><button class="btn ib w32" aria-label="Decrease decimal"><svg class="s24"><use href="#dec2"/></svg></button></div>
    </div><div class="glabel pe-4">Number</div><button class="btn ib launch" aria-label="Number options"><svg class="s12"><use href="#launch"/></svg></button></div>
    <div class="grp" style="width:265px"><div class="gbody flex-column ps-3">
      <button class="btn ib rrow gap-1 justify-content-start"><svg class="s24"><use href="#cf"/></svg>Conditional Formatting <svg class="s12"><use href="#cv"/></svg></button><button class="btn ib rrow gap-1 justify-content-start"><svg class="s24"><use href="#ft"/></svg>Format as Table <svg class="s12"><use href="#cv"/></svg></button><button class="btn ib rrow gap-1 justify-content-start"><svg class="s24"><use href="#cs"/></svg>Cell Styles <svg class="s12"><use href="#cv"/></svg></button>
    </div><div class="glabel">Styles</div></div>
    <div class="grp" style="width:140px"><div class="gbody flex-column ps-3">
      <button class="btn ib rrow gap-1 justify-content-start"><svg class="s24"><use href="#ins"/></svg>Insert <svg class="s12 ms-2"><use href="#cv"/></svg></button><button class="btn ib rrow gap-1 justify-content-start"><svg class="s24"><use href="#del"/></svg>Delete <svg class="s12 ms-2"><use href="#cv"/></svg></button><button class="btn ib rrow gap-1 justify-content-start"><svg class="s24"><use href="#fmt"/></svg>Format <svg class="s12"><use href="#cv"/></svg></button>
    </div><div class="glabel">Cells</div></div>
    <div class="grp" style="width:131px"><div class="gbody ps-3">
      <div class="me-3"><div class="rrow gap-1"><svg class="s24"><use href="#sum"/></svg><svg class="s12 ms-1"><use href="#cv"/></svg></div><div class="rrow gap-1"><svg class="s24"><use href="#fdn"/></svg><svg class="s12"><use href="#cv"/></svg></div><div class="rrow gap-1"><svg class="s24"><use href="#era"/></svg><svg class="s12"><use href="#cv"/></svg></div></div>
      <div><div class="rrow gap-1"><svg class="s24"><use href="#sort"/></svg><svg class="s12"><use href="#cv"/></svg></div><div class="rrow gap-1"><svg class="s24"><use href="#mag"/></svg><svg class="s12"><use href="#cv"/></svg></div></div>
    </div><div class="glabel">Editing</div></div>
    <div class="grp" style="width:86px"><div class="gbody justify-content-center"><button class="btn ib flex-column justify-content-start pt-1"><svg width="36" height="48"><use href="#bolt"/></svg><span class="mt-1">Ideas</span></button></div><div class="glabel">Ideas</div></div>
    <div class="grp" style="width:111px"><div class="gbody justify-content-center"><button class="btn ib flex-column justify-content-start pt-1" style="color:#b1afad"><svg width="40" height="48"><use href="#sens"/></svg><span class="mt-1">Sensitivity</span><svg class="s12 mt-1"><use href="#cv"/></svg></button></div><div class="glabel">Sensitivity</div></div>
    <div class="grp" style="width:173px"><div class="gbody justify-content-center gap-2"><button class="btn ib flex-column justify-content-start pt-2"><svg width="28" height="38" class="mt-1"><use href="#sfile"/></svg><span class="mt-1">Share This<br>File <svg class="s12 d-inline"><use href="#cv"/></svg></span></button><button class="btn ib flex-column justify-content-start pt-2"><svg width="38" height="38" class="mt-1"><use href="#webex"/></svg><span class="mt-1">Webex</span><svg class="s12 mt-2"><use href="#cv"/></svg></button></div><div class="glabel">Webex</div></div>
    <div class="grp" style="width:86px"><div class="gbody justify-content-center"><button class="btn ib flex-column justify-content-start pt-1"><svg class="s48"><use href="#teams"/></svg><span class="mt-1">Webex<br>Teams</span></button></div><div class="glabel">Cisco</div></div>
    <button class="btn ib ms-auto me-3 align-self-end pb-2" aria-label="Collapse ribbon"><svg class="s16"><use href="#up"/></svg></button>
  </div>
  <div class="fbar d-flex align-items-center">
    <div class="selbox"><input class="fbox" style="width:152px" aria-label="Name box"><svg class="s12 me-2"><use href="#tri"/></svg></div>
    <span class="dots mx-3 ms-4"></span>
    <div class="fbox d-flex align-items-center justify-content-around ms-1" style="width:164px"><button class="btn ib text-black-50 opacity-50" aria-label="Cancel"><svg class="s16"><use href="#x"/></svg></button><button class="btn ib text-black-50 opacity-50" aria-label="Enter"><svg class="s20" viewBox="0 0 20 20"><path d="M2 12l5 6L18 3" fill="none" stroke="currentColor" stroke-width="3"/></svg></button><button class="btn ib" aria-label="Insert function"><svg class="s24"><use href="#fx"/></svg></button></div>
    <div class="selbox flex-grow-1 ms-1"><input class="fbox w-100" aria-label="Formula bar"><svg class="s16 me-2"><use href="#cv"/></svg></div>
  </div>
  <div class="d-flex flex-grow-1" style="min-height:0">
    <div class="sheet flex-grow-1" style="width:0"><table class="grid" id="s2018"></table></div>
    <div class="sbar d-flex flex-column"><div class="sbx d-flex justify-content-center align-items-center" style="height:25px"><svg class="s12" style="transform:rotate(180deg)"><use href="#tri"/></svg></div><div class="sbx mt-1 flex-grow-1"></div><div style="height:32px;background:#dadada"></div><div class="sbx d-flex justify-content-center align-items-center" style="height:25px"><svg class="s12"><use href="#tri"/></svg></div></div>
  </div>
  <div class="stabs d-flex">
    <div class="d-flex align-items-center gap-4 ps-4" style="width:118px;color:#bbb"><svg class="s12" style="transform:rotate(90deg)"><use href="#tri"/></svg><svg class="s12" style="transform:rotate(-90deg)"><use href="#tri"/></svg></div>
    <a href="#" style="width:72px">2017</a><a href="#" style="width:72px">2018</a><a href="#" style="width:138px">DQ Analysis</a><a href="#" style="width:189px">AllStocksAnalysis</a><a href="#" class="on" style="width:202px">All Stocks Analysis</a>
    <button class="btn ib ms-4 ps-3" aria-label="New sheet" style="color:#777"><svg class="s24" viewBox="0 0 24 24"><path d="M12 6v12M6 12h12" stroke="currentColor" stroke-width="2"/><circle cx="12" cy="12" r="10.500" fill="none" stroke="currentColor" stroke-width="1.500"/></svg></button>
    <span class="dots ms-auto me-3 mt-1"></span>
    <div class="d-flex" style="width:723px;height:26px;margin:3px 29px 0 0;background:#dadada"><div class="sbx d-flex align-items-center justify-content-center w24"><svg class="s12" style="transform:rotate(90deg)"><use href="#tri"/></svg></div><div class="sbx flex-grow-1 me-4"></div><div class="sbx d-flex align-items-center justify-content-center ms-3 w24"><svg class="s12" style="transform:rotate(-90deg)"><use href="#tri"/></svg></div></div>
  </div>
  <div class="sstat d-flex align-items-center ps-2">
    <svg class="s24"><use href="#rec"/></svg>
    <button class="btn ib ms-auto me-4 gap-1"><svg class="s24"><use href="#dset"/></svg>Display Settings</button>
    <button class="btn ib picked h-100" style="width:60px" aria-label="Normal view"><svg class="s20"><use href="#v1"/></svg></button><button class="btn ib" style="width:60px" aria-label="Page layout"><svg class="s20"><use href="#v2"/></svg></button><button class="btn ib" style="width:60px" aria-label="Page break"><svg class="s20"><use href="#v3"/></svg></button>
    <svg class="s12 ms-2 me-2"><use href="#min"/></svg><input type="range" class="zoomer" min="0" max="100" value="50" aria-label="Zoom"><svg class="s12 ms-2 me-3"><use href="#plus"/></svg><span class="me-3">100%</span>
  </div>
  <div class="msg" style="left:737px;top:437px" role="dialog" aria-label="Microsoft Excel">
    <header class="d-flex align-items-center justify-content-between">Microsoft Excel<button class="btn ib" aria-label="Close"><svg class="s16"><use href="#x"/></svg></button></header>
    <p>This code ran in 0.1601563 seconds for the year 2018</p>
    <footer class="d-flex align-items-center justify-content-end"><button class="btn ok">OK</button></footer>
  </div>
</main>
<footer class="task t1 d-flex align-items-center">
  <button class="btn ib" style="width:72px" aria-label="Start"><svg class="s24"><use href="#start"/></svg></button>
  <label class="find d-flex align-items-center ps-3 gap-3"><svg class="s24"><use href="#mag"/></svg><input placeholder="Type here to search" aria-label="Search"></label>
  <button class="btn ib app" aria-label="Cortana"><svg class="s28"><use href="#cort"/></svg></button><button class="btn ib app" aria-label="Task view"><svg class="s24"><use href="#tview"/></svg></button><button class="btn ib app run" aria-label="Notepad++"><svg class="s36"><use href="#npp"/></svg></button><button class="btn ib app run position-relative" aria-label="Webex Teams"><svg class="s36"><use href="#teams"/></svg><span class="nbadge">11</span></button><button class="btn ib app run" aria-label="Chrome"><svg class="s36"><use href="#chra"/></svg></button><button class="btn ib app run" aria-label="Code"><svg class="s36"><use href="#vs"/></svg></button><button class="btn ib app run" aria-label="Explorer"><svg class="s36"><use href="#fold"/></svg></button><button class="btn ib app front" aria-label="Excel"><svg class="s36"><use href="#xls"/></svg></button><button class="btn ib app run" aria-label="Snipping Tool"><svg class="s36"><use href="#snp"/></svg></button><button class="btn ib app run" aria-label="Paint"><svg class="s36"><use href="#pnt"/></svg></button>
  <div class="ms-auto d-flex align-items-center"><svg width="20" height="20"><use href="#up"/></svg><svg class="s24 ms-3"><use href="#batt"/></svg><svg class="s24 ms-2"><use href="#drop"/></svg><svg class="s24 ms-3"><use href="#vol"/></svg><div class="clock ms-3">4:53 PM<br>3/28/2021</div><svg width="36" height="44" class="ms-4"><use href="#noti"/></svg><span style="width:1px;height:60px;background:#888;margin-left:20px;margin-right:6px"></span></div>
</footer>
</section>

<!-- secondary monitor -->
<section class="monitor d-flex flex-column" style="background:linear-gradient(135deg,#0a8fee,#0450cc 55%,#0438b3)">
<main class="canvas flex-grow-1">
  <!-- code editor -->
  <div class="win vsc">
    <div class="bar d-flex align-items-center justify-content-end"><span class="me-2">● README.md - Election_Analysis - Visual St...</span><button class="btn ib w44" aria-label="Minimize"><svg class="s12"><use href="#min"/></svg></button><button class="btn ib w44" aria-label="Maximize"><svg class="s12"><use href="#max"/></svg></button><button class="btn ib w44" aria-label="Close"><svg class="s12"><use href="#x"/></svg></button></div>
    <div class="tools d-flex align-items-center justify-content-end gap-3 pe-3"><svg class="s16"><use href="#diff"/></svg><svg class="s16"><use href="#prev"/></svg><svg class="s16"><use href="#split"/></svg><span class="fw-bold fs-6">···</span></div>
    <div class="crumb d-flex align-items-center justify-content-end gap-1 pe-1">2<svg class="s12"><use href="#rt"/></svg>stock-analysis<svg class="s12"><use href="#rt"/></svg><svg class="s16"><use href="#info"/></svg>README.md<svg class="s12"><use href="#rt"/></svg><svg class="s16"><use href="#abc"/></svg># stock-analysis<svg class="s12"><use href="#rt"/></svg><svg class="s16"><use href="#abc"/></svg>## Analysis</div>
    <div class="d-flex flex-grow-1" style="min-height:0"><pre class="code"><b> for improvement</b>

avoid nested loop for calculations so that
n the desired result faster than the




e worksheets ('2017' and '2018' worksheets)
er (A to Z), the ticker look up logic has
 value changes as and when all rows of the
processed completely through the loop. The
 through ticker index in the script.

ndex-modifiedcode


<span class="hl"></span>                             ta analysis was
                             the logic of
                             rows are





                             es faster than






                              since it
                             be able to</pre>
      <svg class="mini" id="mini" viewBox="0 0 74 150" preserveAspectRatio="none"></svg><div class="rule"></div></div>
    <div class="panel"><div class="d-flex align-items-center justify-content-end gap-3 pt-1 pe-3"><span class="d-flex align-items-center justify-content-end pe-2" style="background:#3c3c3c;width:180px;height:23px"><svg class="s12"><use href="#cv"/></svg></span><svg class="s16"><use href="#plus"/></svg><svg class="s16"><use href="#split"/></svg><svg class="s16"><use href="#trash"/></svg><svg class="s16"><use href="#up"/></svg><svg class="s12"><use href="#x"/></svg></div><div class="term">Module-3 Python Basics/Electio</div></div>
    <div class="vstat d-flex align-items-center justify-content-end gap-3"><span>UTF-8</span><span>CRLF</span><span>Markdown</span><svg class="s16"><use href="#fb"/></svg><svg class="s16"><use href="#bell"/></svg></div>
  </div>

  <!-- browser -->
  <div class="win chrome d-flex flex-column">
    <div class="cstrip d-flex">
      <div class="ctab on d-flex align-items-center"><span>Module 2 Challenge</span><svg class="s12 ms-auto me-2"><use href="#x"/></svg></div>
      <div class="ctab d-flex align-items-center ps-2 gap-2" style="width:239px;border-right:1px solid #999"><svg class="s16"><use href="#mag"/></svg>Directions and Maps Now<svg class="s12 ms-auto me-2"><use href="#x"/></svg></div>
      <div class="ctab d-flex align-items-center ps-2 gap-2" style="width:239px;border-right:1px solid #999"><svg class="s16" viewBox="0 0 16 16"><path d="M0 0h16v16H0z" fill="#5f01d1"/><path d="M3 4l3 5M9 4l-4 9M12 3v6M12 11v2" stroke="#fff" stroke-width="1.800"/></svg>meaning of refactoring of code -<svg class="s12 ms-auto me-2"><use href="#x"/></svg></div>
      <svg class="s16 ms-3 align-self-center mt-2"><use href="#plus"/></svg>
      <svg class="s16 ms-auto align-self-center mt-2" viewBox="0 0 16 16"><circle cx="8" cy="8" r="8" fill="#555a5f"/><path d="M5 6h6l-3 5z" fill="#fff"/></svg>
      <div class="d-flex ms-3" style="height:30px"><button class="btn ib w44" aria-label="Minimize"><svg class="s12"><use href="#min"/></svg></button><button class="btn ib w44" aria-label="Maximize"><svg class="s12"><use href="#max"/></svg></button><button class="btn ib w44" aria-label="Close"><svg class="s12"><use href="#x"/></svg></button></div>
    </div>
    <div class="d-flex align-items-center" style="height:36px;padding-left:79px"><svg class="s20" viewBox="0 0 20 20"><path d="M16 6a7 7 0 1 0 1 6M17 2v5h-5" fill="none" stroke="#5f6368" stroke-width="2"/></svg>
      <div class="pill flex-grow-1 d-flex align-items-center px-2 gap-2 ms-2"><svg class="s16 ms-1" viewBox="0 0 16 16"><path d="M3 7h10v8H3z" fill="#5f6368"/><path d="M5 7V4q3-5 6 0v3" fill="none" stroke="#5f6368" stroke-width="1.800"/></svg><input class="url" aria-label="Address" value="courses.bootcampspot.com/courses/558/assignments/10266?module_item_id=159113"><svg class="s16" viewBox="0 0 16 16"><path d="M8 1l2 5h5l-4 3.500 1.500 5L8 11.500l-4.500 3 1.500-5L1 6h5z" fill="none" stroke="#5f6368" stroke-width="1.300"/></svg></div>
      <div class="d-flex align-items-center gap-3 ms-3 me-2"><svg class="s16" viewBox="0 0 16 16"><ellipse cx="8" cy="8" rx="6" ry="6.500" fill="none" stroke="#666" stroke-width="3"/></svg><svg class="s16" viewBox="0 0 16 16"><path d="M1 1h14v14H1z" fill="#d9dcdf"/><path d="M2 4l5 5 7-6M10 11l4 4" stroke="#aaa" fill="none"/></svg><svg class="s16" viewBox="0 0 16 16"><path d="M1 4h4q0-4 2.500-4T10 4h3v3q3 0 3 2.500T13 12v3h-4q0-3-2-3t-2 3H1v-4q3 0 3-2T1 7z" fill="#5f6368"/></svg><span class="rounded-circle text-white text-center" style="width:22px;height:22px;line-height:22px;background:#5c6bc0">A</span><svg class="s16" viewBox="0 0 16 16"><path d="M7 1h2v3H7zM7 6.500h2v3H7zM7 12h2v3H7z" fill="#5f6368"/></svg></div>
    </div>
    <div class="marks d-flex align-items-center"><a href="#">Apps</a><a href="#"><svg class="s16"><use href="#box"/></svg>DF - Box</a><a href="#"><svg class="s16"><use href="#redo2"/></svg>EDS SAP HANA Plat...</a><a href="#"><svg class="s16"><use href="#globe"/></svg>Cognilytics email</a><a href="#"><svg class="s16"><use href="#redo2"/></svg>Rally-CISCO</a><a href="#"><svg class="s16"><use href="#clar"/></svg>Clarity PPM :: Login</a><a href="#"><svg class="s16"><use href="#sap"/></svg>SAP Support</a><a href="#"><svg class="s16"><use href="#sap"/></svg>Dev-Web IDE</a><a href="#"><svg class="s16"><use href="#globe"/></svg>eds-hana-dev-hip.c...</a><a href="#"><svg class="s16"><use href="#cube"/></svg>Configuration</a><span class="ms-auto me-3 fs-6">»</span></div>
    <div class="d-flex flex-grow-1" style="min-height:0">
      <nav class="side"><div class="logo d-flex"><div>Berkeley<br>Extension</div></div><a href="#">Account</a><a href="#">Dashboard</a><a href="#" class="on">Courses</a><a href="#">Calendar</a><a href="#">Inbox</a><a href="#">History</a><a href="#">Help</a></nav>
      <article class="lesson">
        <ul><li>There are comments to explain the purpose of the code <b>(5 pt)</b>.</li><li>The outputs for the 2017 and 2018 stock analyses in the<br><code>VBA_Challenge.xlsm</code> workbook match the outputs from the<br>AllStockAnalysis in the module <b>(5 pt)</b>.</li><li>The pop-up messages showing the elapsed run time for the script<br>saved as <code>VBA_Challenge_2017.png</code> and <code>VBA_Challenge_2018.png</code> <b>(5 pt)</b></li></ul>
        <hr>
        <h2>Deliverable 2: Written Analysis of Results (20<br>points)</h2>
        <h3>Deliverable 2</h3>
        <p>Initialize your<br>Deliverable 2</p>
        <div><span class="note">NOTE</span></div>
        <p class="quote">This <a href="#">document</a><br>and formatting</p>
        <p>For your written<br>sentences that<br>cover the</p>
        <ol><li>Overview</li><li>Results<br>performance<br>of the</li></ol>
      </article>
      <div class="ms-auto text-center gr pt-2" style="width:17px;color:#333"><svg class="s12 m-auto mt-1" style="transform:rotate(180deg)"><use href="#tri"/></svg></div>
    </div>
  </div>

  <!-- VBA editor, mostly off this screen -->
  <div class="win vba d-flex flex-column">
    <div class="d-flex align-items-center justify-content-end pe-4" style="height:44px;color:#888"><svg class="s16 me-1"><use href="#x"/></svg></div>
    <div class="d-flex align-items-center justify-content-end gap-3 pe-2" style="height:38px;background:#f8f8f8;color:#000"><svg class="s12"><use href="#rest"/></svg><svg class="s12"><use href="#x"/></svg></div>
    <div class="d-flex" style="height:62px;background:#f0f0f0;border-bottom:2px solid #888"><svg width="28" height="60" viewBox="0 0 28 60"><path d="M0 18h11v24H0M8 34h12v12H8" fill="#eee" stroke="#bbb" stroke-width="3"/></svg><svg width="28" height="62" viewBox="0 0 28 62"><path d="M0 0h28v62H0z" fill="#a8a8a8"/><path d="M3 34h22" stroke="#000" stroke-width="2"/><path d="M3 41h22L14 54z"/></svg></div>
    <div class="d-flex align-items-center justify-content-end pe-1 me-2" style="height:26px;margin-top:4px;border:1px solid #888;color:#555"><svg class="s16"><use href="#cv"/></svg></div>
    <div style="height:5px;border-bottom:1px solid #777;margin-right:28px"></div>
    <div class="d-flex justify-content-end flex-grow-1"><div class="gr d-flex flex-column align-items-center" style="width:28px;color:#555"><svg class="s16 mt-3"><use href="#up"/></svg><div style="width:24px;height:121px;background:#cdcdcd;margin-top:252px"></div><svg class="s16 mt-auto mb-2"><use href="#cv"/></svg></div></div>
    <div class="gr d-flex align-items-center justify-content-between px-2" style="height:34px;color:#555"><svg class="s16"><use href="#rt"/></svg><svg class="s12 align-self-end mb-1"><use href="#grip"/></svg></div>
    <div class="d-flex justify-content-end align-items-center" style="height:33px;background:#bfcddb;margin:2px 0 4px"><span class="d-flex align-items-center justify-content-center" style="width:30px;height:31px;background:#f0f0f0;border:1px solid #888"><svg class="s20" viewBox="0 0 16 16"><path d="M1 1l14 14M15 1L1 15" stroke="#000" stroke-width="2.500"/></svg></span></div>
    <div class="gr d-flex justify-content-end" style="height:28px"><span class="picked text-center" style="width:27px">...</span></div>
    <div class="d-flex justify-content-end" style="height:106px;border-top:2px solid #777;margin-top:4px"><div class="gr d-flex flex-column align-items-center" style="width:28px;color:#555"><svg class="s16 my-1"><use href="#up"/></svg><div style="width:24px;height:48px;background:#cdcdcd"></div><svg class="s16 mt-2"><use href="#cv"/></svg></div></div>
  </div>

  <!-- snipping tool -->
  <div class="win snip">
    <div class="cap d-flex align-items-center ps-1"><svg class="s20 mx-1"><use href="#snp"/></svg><span>Snipping Tool</span><button class="btn ib w44 ms-auto" aria-label="Minimize"><svg class="s12"><use href="#min"/></svg></button><button class="btn ib w44" aria-label="Maximize"><svg class="s12"><use href="#max"/></svg></button><button class="btn ib w44" aria-label="Close"><svg class="s12"><use href="#x"/></svg></button></div>
    <nav class="menu d-flex align-items-center"><a href="#">File</a><a href="#">Edit</a><a href="#">Tools</a><a href="#">Help</a></nav>
    <div class="tb d-flex align-items-center ps-1"><button class="btn ib"><svg class="s24 me-1"><use href="#snp"/></svg><span><u>N</u>ew</span></button><button class="btn ib gap-1 ms-2"><svg width="24" height="20"><use href="#mode"/></svg><span><u>M</u>ode</span></button><svg class="s12 ms-2 me-2"><use href="#tri"/></svg><button class="btn ib gap-1"><svg class="s24"><use href="#clk"/></svg><span><u>D</u>elay</span></button><svg class="s12 ms-2 me-1"><use href="#tri"/></svg><svg class="s24"><use href="#dsk"/></svg><svg class="s24 ms-2 me-3"><use href="#cp2"/></svg><svg class="s24 me-2"><use href="#mail"/></svg><svg class="s12 ms-1 me-1"><use href="#tri"/></svg><span class="vsep" style="background:#888"></span><svg class="s24 ms-3 me-2"><use href="#pen"/></svg><svg class="s12 me-1 ms-1"><use href="#tri"/></svg><svg class="s24 me-2"><use href="#hil"/></svg><svg class="s24 me-2"><use href="#ers"/></svg><span class="vsep" style="background:#888"></span><svg class="s20 ms-2"><use href="#p3d"/></svg></div>
    <div class="d-flex flex-grow-1" style="min-height:0">
      <div class="flex-grow-1 position-relative" style="width:0"><div class="shot"><table class="grid" id="s2017"></table>
        <div class="msg" style="left:721px;top:121px"><header class="d-flex align-items-center">Microsoft Excel</header><p>This code ran in 0.1953125 seconds for the year 2017</p><footer></footer></div>
        <div class="red"></div></div></div>
      <div class="gr d-flex flex-column align-items-center" style="width:16px;color:#444"><svg class="s12 mt-1"><use href="#up"/></svg><div style="width:16px;height:158px;background:#cdcdcd;margin-top:127px"></div><svg class="s12 mt-auto mb-1"><use href="#cv"/></svg></div>
    </div>
    <div class="gr d-flex align-items-center px-1" style="height:16px;color:#444"><svg class="s12"><use href="#lt"/></svg><div style="width:392px;height:16px;background:#cdcdcd;margin-left:157px"></div><svg class="s12 ms-auto me-1"><use href="#rt"/></svg><svg class="s12"><use href="#grip"/></svg></div>
  </div>
</main>
<footer class="task t2 d-flex align-items-center">
  <button class="btn ib app" aria-label="Start"><svg class="s16"><use href="#start"/></svg></button><button class="btn ib app" aria-label="Search" style="color:#fff"><svg class="s16"><use href="#mag"/></svg></button><button class="btn ib app" aria-label="Cortana"><svg class="s16"><use href="#cort"/></svg></button><button class="btn ib app" aria-label="Task view"><svg class="s16"><use href="#tview"/></svg></button><button class="btn ib app run" aria-label="Notepad++"><svg class="s24"><use href="#npp"/></svg></button><button class="btn ib app run position-relative" aria-label="Webex Teams"><svg class="s24"><use href="#teams"/></svg><span class="nbadge">11</span></button><button class="btn ib app run" aria-label="Chrome"><svg class="s24"><use href="#chra"/></svg></button><button class="btn ib app run" aria-label="Code"><svg class="s24"><use href="#vs"/></svg></button><button class="btn ib app run" aria-label="Explorer"><svg class="s24"><use href="#fold"/></svg></button><button class="btn ib app front" aria-label="Excel"><svg class="s24"><use href="#xls"/></svg></button><button class="btn ib app run" aria-label="Snipping Tool"><svg class="s24"><use href="#snp"/></svg></button><button class="btn ib app run" aria-label="Paint"><svg class="s24"><use href="#pnt"/></svg></button>
  <div class="clock ms-auto me-2">4:53 PM<br>3/28/2021</div>
</footer>
</section>
</div>

<script>
// Fill both worksheets: title, header row, then ticker / volume / return.
function sheet(id, year, data, rows){
  const cols='ABCDEFGHIJKLMNOPQRS'.split('');
  let h='<colgroup><col style="width:40px">'+cols.map(c=>`<col style="width:${c==='B'?183:96}px">`).join('')+'</colgroup>';
  h+='<thead><tr><th class="corner"></th>'+cols.map(c=>`<th class="${c==='F'?'cur':''}">${c}</th>`).join('')+'</tr></thead><tbody>';
  for(let r=1;r<=rows;r++){
    h+=`<tr><th class="num text-center ${r===11?'cur':''}">${r}</th>`;
    cols.forEach((c,i)=>{
      let cls='',t='';
      const d=data[r-4];
      if(r===1&&i===0){t=`All Stocks (${year})`;cls='nb'}
      if(r===3&&i<3){t=['Ticker','Total Daily Volume','Return'][i];cls='hd'}
      if(d&&r>3&&i<3){t=d[i];if(i)cls='num';if(i===2){cls+=t[0]==='-'?' neg':' pos'}}
      if(r===11&&c==='F')cls='act';
      h+=`<td class="${cls}">${t}</td>`;
    });
    h+='</tr>';
  }
  const t=document.getElementById(id);t.innerHTML=h+'</tbody>';t.style.width=(40+183+96*18)+'px';
}
sheet('s2018',2018,[['AY','83,079,900','-7.3%'],['CSIQ','200,879,900','-16.3%'],['DQ','107,873,900','-62.6%'],['ENPH','607,473,500','81.9%'],['FSLR','478,113,900','-39.7%'],['HASI','104,340,600','-20.7%'],['JKS','158,309,000','-60.5%'],['RUN','502,757,100','84.0%'],['SEDG','237,212,300','-7.8%'],['SPWR','538,024,300','-44.6%'],['TERP','151,434,700','-5.0%'],['VSLR','136,539,100','-3.5%']],22);
sheet('s2017',2017,[['AY','136,070,900','8.9%'],['CSIQ','310,592,800','33.1%'],['DQ','35,796,200','199.4%'],['ENPH','221,772,100','129.5%'],['FSLR','684,181,400','101.3%'],['HASI','80,949,300','25.8%'],['JKS','191,632,200','53.9%'],['RUN','267,681,300','5.5%'],['SEDG','206,885,200','184.5%'],['SPWR','782,187,000','23.1%']],13);
// Overview of the document beside the code: [y, indent, width, heading?]
const m=[[1,0,32,1],[6,0,68],[9,0,60],[14,0,26,1],[18,0,30,1],[23,0,68],[26,4,64],[29,8,62],[32,8,58],[35,8,14],[39,4,30],[43,4,44],[46,8,60],[49,8,60],[52,8,54],[57,4,36],[61,0,42,1],[65,0,68],[69,0,12],[73,0,22,1],[77,0,68],[80,0,66],[83,0,68],[86,0,62],[89,0,40],[93,0,16,1],[98,0,68],[101,0,64],[104,0,8],[109,0,10,1],[113,0,68],[116,0,32],[123,0,32,1],[127,0,62],[130,0,66],[133,0,36],[136,0,40,1],[140,0,66],[143,0,50]];
document.getElementById('mini').innerHTML=m.map(a=>`<path d="M${a[1]} ${a[0]}h${a[2]}" stroke="${a[3]?'#3c6a92':'#777'}" stroke-width="2" stroke-dasharray="5 .7 3 .7"/>`).join('');
</script>
<script src="https://cdn.jsdelivr.net/npm/bootstrap@5.3.0/dist/js/bootstrap.bundle.min.js"></script>
</body>
</html>
